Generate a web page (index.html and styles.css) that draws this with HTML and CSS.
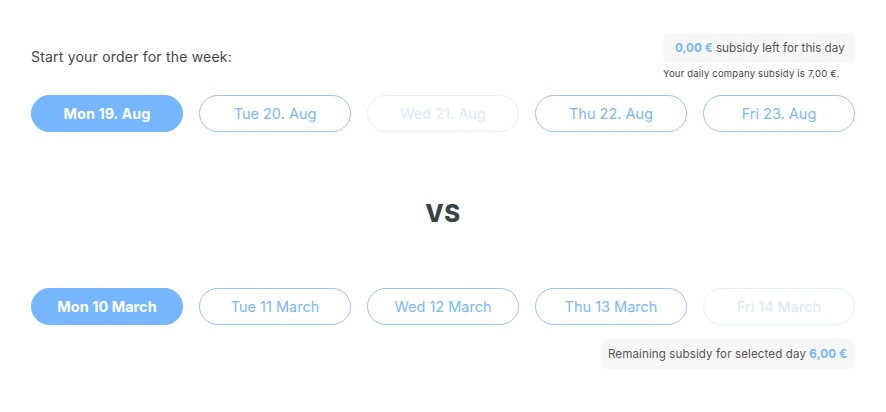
FILE: index.html
```html
<!DOCTYPE html>
<html>
<head>
<meta charset="utf-8">
<link rel="stylesheet" href="styles.css">
</head>
<body>
<div class="page">
  <section class="block top">
    <div class="head">
      <div class="title">Start your order for the week:</div>
      <div class="info">
        <div class="pill-box"><span class="amount">0,00 €</span> subsidy left for this day</div>
        <div class="note">Your daily company subsidy is 7,00 €.</div>
      </div>
    </div>
    <div class="days">
      <div class="day active">Mon 19. Aug</div>
      <div class="day">Tue 20. Aug</div>
      <div class="day disabled">Wed 21. Aug</div>
      <div class="day">Thu 22. Aug</div>
      <div class="day">Fri 23. Aug</div>
    </div>
  </section>
  <div class="vs">VS</div>
  <section class="block bottom">
    <div class="days">
      <div class="day active">Mon 10 March</div>
      <div class="day">Tue 11 March</div>
      <div class="day">Wed 12 March</div>
      <div class="day">Thu 13 March</div>
      <div class="day disabled">Fri 14 March</div>
    </div>
    <div class="foot">
      <div class="pill-box small">Remaining subsidy for selected day <span class="amount">6,00 €</span></div>
    </div>
  </section>
</div>
</body>
</html>
```
FILE: styles.css
```css
* { box-sizing: border-box; }
html, body { margin: 0; padding: 0; background: #ffffff; }
body { font-family: "Inter", "Open Sans", sans-serif; color: #444; }
.page { width: 886px; padding: 33px 31px 0 31px; }
.head { display: flex; justify-content: space-between; align-items: flex-start; }
.title { margin-top: 14px; font-size: 14px; line-height: 20px; color: #474747; letter-spacing: 0.2px; }
.info { display: flex; flex-direction: column; align-items: flex-start; width: 192px; }
.pill-box { height: 30px; display: flex; align-items: center; padding: 0 12px; background: #f7f7f7; border-radius: 7px; font-size: 11.7px; color: #555; white-space: pre; width: 192px; }
.amount { color: #74b5fb; font-weight: 700; }
.note { margin-top: 5px; font-size: 9.5px; line-height: 12px; color: #444; letter-spacing: 0.2px; }
.days { display: flex; gap: 16px; margin-top: 15px; }
.day { width: 152px; height: 37px; border-radius: 19px; border: 1.5px solid #93c6fb; color: #7ab8fa; display: flex; align-items: center; justify-content: center; font-size: 14.5px; }
.day.active { background: #75b6fc; border-color: #75b6fc; color: #ffffff; font-weight: 700; }
.day.disabled { border-color: #e3effd; color: #d9e9fc; }
.vs { text-align: center; font-size: 24px; font-weight: 800; color: #3b4345; line-height: 30px; margin-top: 67px; letter-spacing: 0.5px; }
.bottom .days { margin-top: 59px; }
.foot { display: flex; justify-content: flex-end; margin-top: 14px; }
.pill-box.small { width: auto; padding: 0 8px 0 7px; font-size: 11.6px; letter-spacing: 0.1px; }
```
